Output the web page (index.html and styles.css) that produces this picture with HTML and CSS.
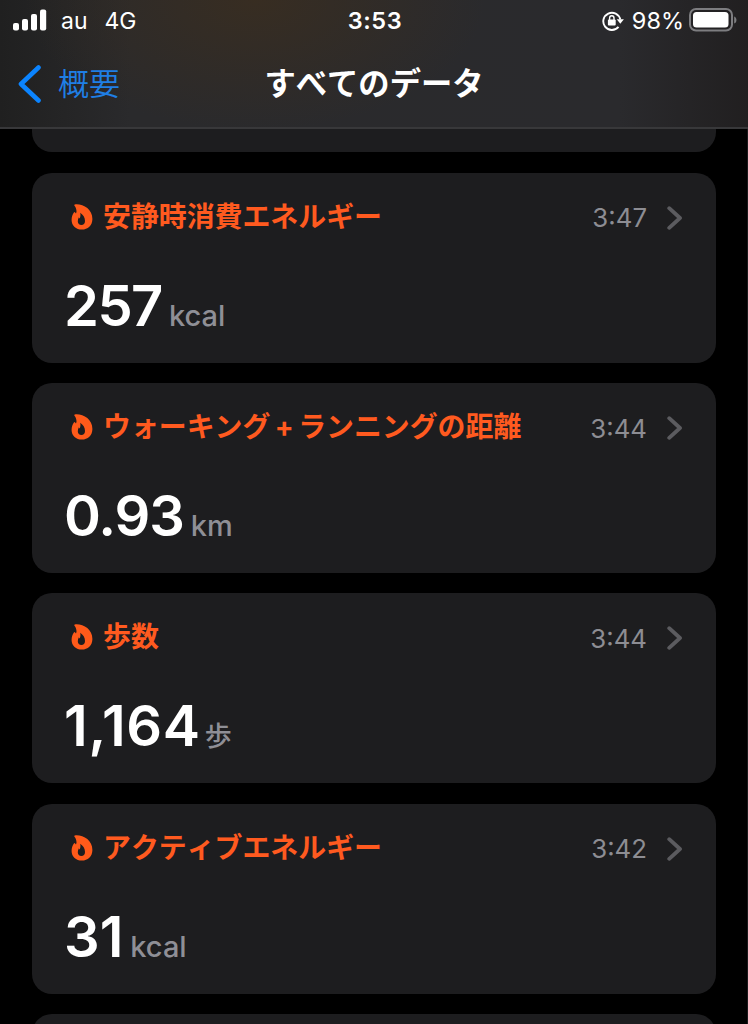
FILE: index.html
```html
<!DOCTYPE html>
<html lang="ja">
<head>
<meta charset="utf-8">
<title>すべてのデータ</title>
<link rel="stylesheet" href="styles.css">
</head>
<body>
<svg width="0" height="0" class="defs">
  <symbol id="flame" viewBox="0 0 22 26">
    <path fill-rule="evenodd" d="M3.900 .4C12 -.4 21.400 5 21.400 15C21.400 21.500 16.800 25.600 10.900 25.600C5 25.600 .6 21.800 .6 16C.6 12.500 1.600 10.300 2.900 8.400L3.700 7.900L5 9.400L5.500 7.700C5.500 5.200 4.900 3.300 3.500 1.700C3 1.100 3.200 .5 3.900 .4ZM9.200 8.700C9.700 11 9.500 12.700 8.700 14.600C8.300 14.200 8.100 13.800 7.900 13.300C7.200 14.600 6.800 16.100 6.800 17.300C6.800 19.500 8.200 21.100 10.400 21.100C12.600 21.100 14 19.500 14 17C14 13.500 12.200 10.700 9.200 8.700Z"/>
  </symbol>
  <symbol id="chevron" viewBox="0 0 16 24">
    <path d="M2.200 2.200L13 12L2.200 21.800" fill="none" stroke="currentColor" stroke-width="3.800" stroke-linecap="round" stroke-linejoin="round"/>
  </symbol>
</svg>
<header class="top">
  <div class="status">
    <div class="carrier">
      <svg class="signal" viewBox="0 0 34 22"><rect x="0" y="14" width="6" height="7.500" rx="2"/><rect x="9" y="10" width="6" height="11.500" rx="2"/><rect x="18" y="5" width="6" height="16.500" rx="2"/><rect x="27" y="0.500" width="6.200" height="21" rx="2"/></svg>
      <span class="network">au</span><span class="radio">4G</span>
    </div>
    <span class="clock">3:53</span>
    <div class="power">
      <svg class="lock" viewBox="0 0 22 20"><path d="M16.500 15.900A8.600 8.600 0 1 1 18.300 8.500" fill="none" stroke="#fff" stroke-width="1.900"/><path d="M14.700 8.300H21.900L18.300 12.800Z"/><rect x="5.900" y="8.600" width="7.800" height="5.900" rx="1"/><path d="M7.600 9V7A2.200 2.200 0 0 1 12 7V9" fill="none" stroke="#fff" stroke-width="1.400"/></svg>
      <span class="percent">98%</span>
      <svg class="battery" viewBox="0 0 48 24"><rect x="1" y="1" width="42" height="21.500" rx="6" fill="none" stroke="#7d7d80" stroke-width="2"/><rect x="4" y="4" width="35.500" height="15.500" rx="3.500"/><path d="M45.200 8.500C48.200 9.500 48.200 14.500 45.200 15.500Z" fill="#7d7d80"/></svg>
    </div>
  </div>
  <nav class="nav">
    <a class="back"><svg class="back-icon" viewBox="0 0 24 40"><path d="M20.500 3.500L3 20L20.500 36.500" fill="none" stroke="#0b84ff" stroke-width="4.600" stroke-linecap="round" stroke-linejoin="round"/></svg><span>概要</span></a>
    <h1 class="title">すべてのデータ</h1>
  </nav>
</header>
<main class="list">
  <section class="card card-previous"></section>
  <section class="card">
    <div class="head"><svg class="flame"><use href="#flame"/></svg><h2>安静時消費エネルギー</h2><time>3:47</time><svg class="chevron"><use href="#chevron"/></svg></div>
    <div class="reading"><span class="value v-rest">257</span><span class="unit">kcal</span></div>
  </section>
  <section class="card">
    <div class="head"><svg class="flame"><use href="#flame"/></svg><h2>ウォーキング<span class="plus">+</span>ランニングの距離</h2><time>3:44</time><svg class="chevron"><use href="#chevron"/></svg></div>
    <div class="reading"><span class="value v-distance">0.93</span><span class="unit">km</span></div>
  </section>
  <section class="card">
    <div class="head"><svg class="flame"><use href="#flame"/></svg><h2>歩数</h2><time>3:44</time><svg class="chevron"><use href="#chevron"/></svg></div>
    <div class="reading"><span class="value v-steps">1,164</span><span class="unit unit-ja">歩</span></div>
  </section>
  <section class="card">
    <div class="head"><svg class="flame"><use href="#flame"/></svg><h2>アクティブエネルギー</h2><time>3:42</time><svg class="chevron"><use href="#chevron"/></svg></div>
    <div class="reading"><span class="value v-active">31</span><span class="unit">kcal</span></div>
  </section>
  <section class="card card-next"></section>
</main>
</body>
</html>
```
FILE: styles.css
```css
* { box-sizing: border-box; }
body {
  margin: 0;
  height: 1024px;
  overflow: hidden;
  display: flex;
  flex-direction: column;
  background: #000;
  color: #fff;
  font-family: Inter, "Noto Sans CJK JP", sans-serif;
}
svg { display: block; flex: none; fill: #fff; }
.defs { position: absolute; }
.top {
  flex: none;
  height: 129px;
  border-bottom: 2px solid #38383a;
  background:
    radial-gradient(ellipse 230px 130px at 255px 0, rgba(60, 46, 30, .75), rgba(60, 46, 30, 0)),
    linear-gradient(90deg, #202020 0, #2a2a2c 130px, #2a2a2d 620px, #211f20 748px);
}
.status {
  display: grid;
  grid-template-columns: 1fr auto 1fr;
  align-items: center;
  height: 40px;
  padding: 0 11px 0 13px;
  font-size: 23px;
  line-height: 42px;
}
.carrier, .power { display: flex; align-items: center; }
.signal { width: 34px; height: 22px; margin-top: -3px; }
.network { margin-left: 14px; }
.radio { margin-left: 17px; }
.clock { font-size: 23.500px; font-weight: 600; letter-spacing: .6px; }
.power { justify-content: flex-end; }
.lock { width: 22px; height: 20px; margin: -1px 8px 0 0; }
.percent { font-size: 23.500px; }
.battery { width: 48px; height: 24px; margin: -2px 0 0 5px; }
.nav {
  display: grid;
  grid-template-columns: 1fr auto 1fr;
  align-items: center;
  height: 88px;
  padding: 0 18px;
}
.back { display: flex; align-items: center; color: #1f7fe5; font-size: 31px; line-height: 40px; font-weight: 350; }
.back-icon { width: 24px; height: 40px; margin-right: 16px; }
.title { margin: 0; font-size: 31.300px; line-height: 40px; font-weight: 700; font-kerning: none; }
.list { flex: 1; min-height: 0; overflow: hidden; display: flex; flex-direction: column; gap: 20.4px; padding: 0 31px 0 32px; border-right: 1px solid #1a1a1c; }
.card {
  flex: none;
  height: 190px;
  padding: 26px 33px 0 39px;
  border-radius: 20px;
  background: #1d1d1f;
}
.card-previous { height: 23.3px; padding: 0; border-radius: 0 0 20px 20px; }
.card-next { padding: 0; }
.head { display: flex; align-items: center; height: 38px; color: #ff5a1f; }
.flame { width: 22px; height: 26px; margin: -2px 10px 0 0; fill: #ff5a1a; }
.head h2 { flex: 1; margin: -1px 0 1px; font-size: 27.900px; line-height: 38px; font-weight: 700; white-space: nowrap; font-kerning: none; }
.plus { display: inline-block; width: 27.800px; text-align: center; }
.head time { color: #8d8d93; font-size: 25.800px; }
.chevron { width: 16px; height: 24px; margin-left: 20px; color: #5b5b5f; }
.reading { display: flex; align-items: baseline; margin: 34px 0 0 -7px; line-height: 70px; }
.value { font-size: 56px; font-weight: 600; }
.v-rest { letter-spacing: -1.500px; }
.v-distance { letter-spacing: -1.100px; }
.v-steps { letter-spacing: .7px; }
.unit { margin-left: 7px; color: #8f8f96; font-size: 29px; font-weight: 500; }
.unit-ja { margin: -2px 0 2px 4px; font-size: 27px; }
```
